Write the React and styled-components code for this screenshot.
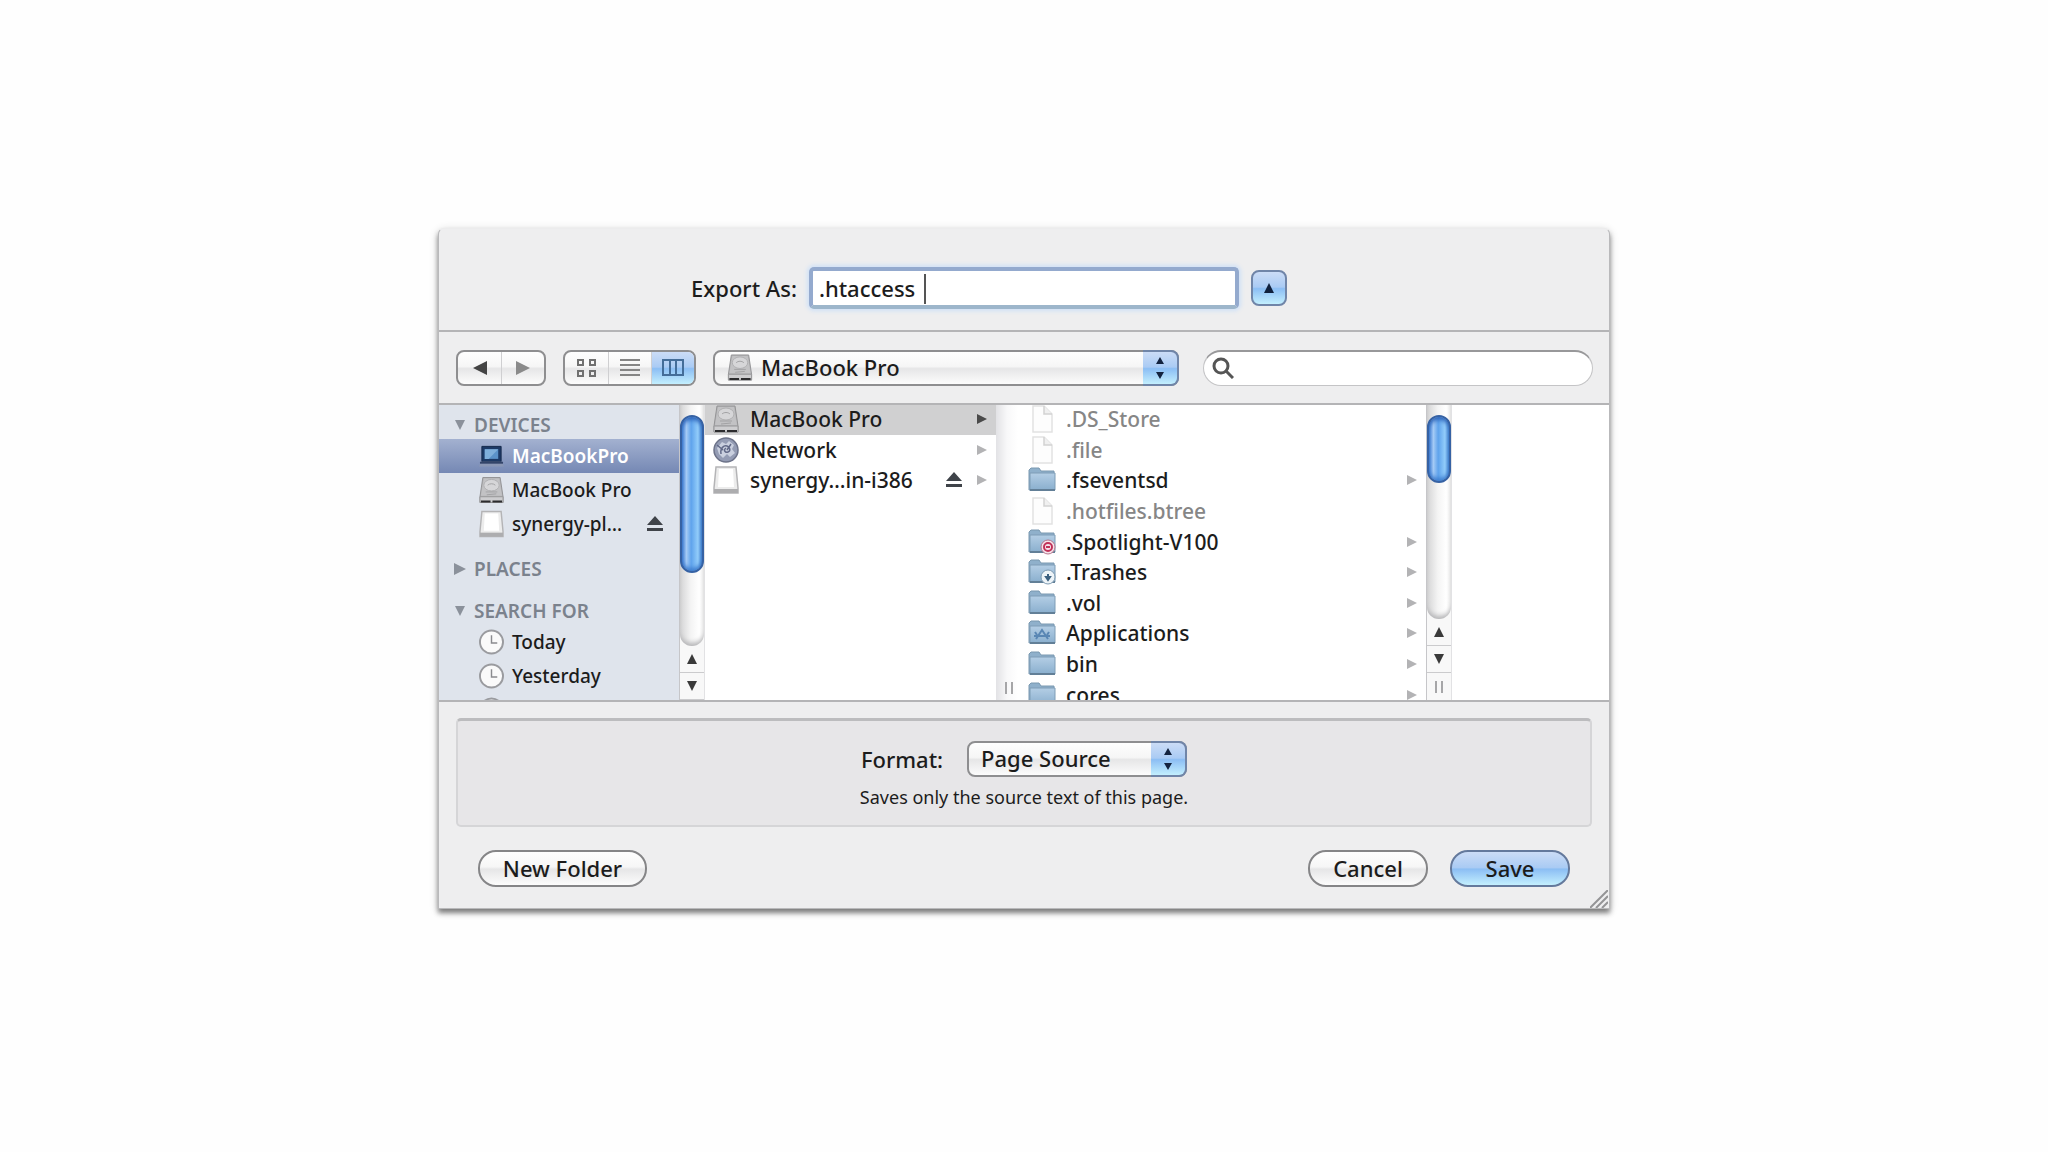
// Import: Dependencies
import React from "react";
import styled, { createGlobalStyle, css } from "styled-components";

// Data: Sidebar
const devices = [
  { name: "MacBookPro", icon: "laptop", selected: true },
  { name: "MacBook Pro", icon: "drive" },
  { name: "synergy-pl…", icon: "volume", ejectable: true },
];

const searches = [
  { name: "Today", icon: "clock" },
  { name: "Yesterday", icon: "clock" },
  { name: "Past Week", icon: "clock" },
];

// Data: Columns
const volumes = [
  { name: "MacBook Pro", icon: "drive", branch: true, selected: true },
  { name: "Network", icon: "network", branch: true },
  { name: "synergy…in-i386", icon: "volume", branch: true, ejectable: true },
];

const files = [
  { name: ".DS_Store", icon: "file", dimmed: true },
  { name: ".file", icon: "file", dimmed: true },
  { name: ".fseventsd", icon: "folder", branch: true },
  { name: ".hotfiles.btree", icon: "file", dimmed: true },
  { name: ".Spotlight-V100", icon: "locked", branch: true },
  { name: ".Trashes", icon: "dropbox", branch: true },
  { name: ".vol", icon: "folder", branch: true },
  { name: "Applications", icon: "apps", branch: true },
  { name: "bin", icon: "folder", branch: true },
  { name: "cores", icon: "folder", branch: true },
];

// UI: Drive icon
function DriveIcon() {
  return (
    <svg viewBox="0 0 26 28" aria-hidden="true">
      <path d="M4 1h18l3 20v6H1v-6z" fill="#b3b3b5" stroke="#939395" />
      <path d="M5 2h16l3 18H2z" fill="#c2c2c4" />
      <ellipse cx="13" cy="9" rx="8" ry="6" fill="#d6d6d8" stroke="#b0b0b2" />
      <path d="M9 9c2-2 6-2 8 0M7 16h12M8 19l10-1" fill="none" stroke="#a2a2a4" />
      <path d="M1 21h24v6H1z" fill="#cdcdcf" stroke="#98989a" />
      <path d="M2 26h10M14 26h10" stroke="#2c2c2e" strokeWidth="2" />
    </svg>
  );
}

// UI: Laptop icon
function LaptopIcon() {
  return (
    <svg viewBox="0 0 26 28" aria-hidden="true">
      <path d="M3 4h20v16H3z" fill="#1d3a66" stroke="#14284a" />
      <path d="M6 7h14v10H6z" fill="#5b92c9" />
      <path d="M6 7h14L10 17H6z" fill="#7fafdb" />
      <path d="M2 20h22l2 5H0z" fill="#8a97b5" />
      <path d="M1 21h24" stroke="#33456a" strokeWidth="2" />
    </svg>
  );
}

// UI: Volume icon
function VolumeIcon() {
  return (
    <svg viewBox="0 0 26 28" aria-hidden="true">
      <path d="M3 1h20l2 21v5H1v-5z" fill="#ececec" stroke="#b4b4b6" strokeWidth="1.5" />
      <path d="M6 3h14l1 18H5z" fill="#fff" />
      <path d="M1 23h24v4H1z" fill="#adadaf" />
    </svg>
  );
}

// UI: Clock icon
function ClockIcon() {
  return (
    <svg viewBox="0 0 26 28" aria-hidden="true">
      <circle cx="13" cy="14" r="12" fill="#fafafa" stroke="#9a9b9f" strokeWidth="2" />
      <path d="M13 7v8h6" fill="none" stroke="#8a8b8f" strokeWidth="1.5" />
    </svg>
  );
}

// UI: Network icon
function NetworkIcon() {
  return (
    <svg viewBox="0 0 26 28" aria-hidden="true">
      <circle cx="13" cy="14" r="12" fill="#949cb4" stroke="#6d7389" strokeWidth="1.5" />
      <path
        d="M4 12l5-6 4 2 3-3 5 4-2 4 3 4-5 4-3-3-4 4-4-4z"
        fill="#d3d9e6"
        opacity=".85"
      />
      <path
        d="M8 18c-1-6 3-9 6-8s4 5 1 6-5-2-2-4M4 9l6 5M18 8l-4 6"
        fill="none"
        stroke="#626a88"
        strokeWidth="1.5"
      />
    </svg>
  );
}

// UI: File icon
function FileIcon() {
  return (
    <svg viewBox="0 0 28 28" aria-hidden="true">
      <path d="M5 1h11l8 8v18H5z" fill="#fdfdfd" stroke="#e2e2e2" strokeWidth="1.5" />
      <path d="M16 1v8h8" fill="#f0f0f0" stroke="#d2d2d2" strokeWidth="1.5" />
    </svg>
  );
}

// UI: Folder icon, with the mark that sits on it
function FolderIcon({ mark }) {
  return (
    <svg viewBox="0 0 28 28" aria-hidden="true">
      <defs>
        <linearGradient id="folder-fill" x1="0" y1="0" x2="0" y2="1">
          <stop offset="0" stopColor="#b4cee5" />
          <stop offset="1" stopColor="#8aafce" />
        </linearGradient>
      </defs>
      <path d="M1 24V4l2-2h8l2 3h13v19z" fill="#8fb0cb" stroke="#7a98b0" />
      <path d="M2 7h25v17H2z" fill="url(#folder-fill)" stroke="#7f9db6" />
      <path d="M2 24h25" stroke="#627f97" strokeWidth="2" />
      {mark === "locked" && (
        <>
          <circle cx="20" cy="19" r="7" fill="#f5e3ea" stroke="#b5788f" />
          <circle cx="20" cy="19" r="4" fill="none" stroke="#c2335a" strokeWidth="2" />
          <path d="M18 19h4" stroke="#c2335a" strokeWidth="2" />
        </>
      )}
      {mark === "dropbox" && (
        <>
          <circle cx="20" cy="19" r="7" fill="#eef4f8" stroke="#7e9bb2" />
          <path d="M20 16v5M18 19l2 3 2-3z" fill="#3c6180" stroke="#3c6180" strokeWidth="2" />
        </>
      )}
      {mark === "apps" && (
        <path
          d="M8 20l6-9 6 9M6 17h5M17 17h5M11 17h6M7 13l2 3M21 13l-2 3"
          fill="none"
          stroke="#5a87b4"
          strokeWidth="2"
        />
      )}
    </svg>
  );
}

// UI: ItemIcon
function ItemIcon({ icon }) {
  switch (icon) {
    case "drive":
      return <DriveIcon />;
    case "laptop":
      return <LaptopIcon />;
    case "volume":
      return <VolumeIcon />;
    case "clock":
      return <ClockIcon />;
    case "network":
      return <NetworkIcon />;
    case "file":
      return <FileIcon />;
    default:
      return <FolderIcon mark={icon} />;
  }
}

// UI: Eject
function Eject() {
  return (
    <EjectButton type="button" aria-label="Eject">
      <svg viewBox="0 0 18 18" width="18" height="18">
        <path d="M9 1l8 9H1zM1 13h16v3H1z" fill="#3f4349" />
      </svg>
    </EjectButton>
  );
}

// UI: Arrow
function Arrow({ direction, size = 12, color = "#3a3a3a" }) {
  const shapes = {
    up: "M6 1l5 10H1z",
    down: "M6 11l5-10H1z",
    left: "M0 6l12-6v12z",
    right: "M12 6L0 0v12z",
  };

  return (
    <svg viewBox="0 0 12 12" width={size} height={size} aria-hidden="true">
      <path d={shapes[direction]} fill={color} />
    </svg>
  );
}

// UI: Scrollbar
function Scrollbar({ thumb, children }) {
  return (
    <ScrollbarContainer>
      <ScrollTrack>
        <ScrollThumb $size={thumb} />
      </ScrollTrack>
      <ScrollButton type="button" aria-label="Scroll up">
        <Arrow direction="up" />
      </ScrollButton>
      <ScrollButton type="button" aria-label="Scroll down">
        <Arrow direction="down" />
      </ScrollButton>
      {children}
    </ScrollbarContainer>
  );
}

// UI: SidebarGroup
function SidebarGroup({ title, open, items = [] }) {
  return (
    <SidebarSection>
      <SidebarHeading type="button" aria-expanded={Boolean(open)}>
        <Arrow direction={open ? "down" : "right"} color="#8b919b" />
        {title}
      </SidebarHeading>
      {items.map((item) => (
        <SidebarRow key={item.name} $selected={item.selected}>
          <SidebarItem type="button">
            <ItemIcon icon={item.icon} />
            {item.name}
          </SidebarItem>
          {item.ejectable && <Eject />}
        </SidebarRow>
      ))}
    </SidebarSection>
  );
}

// UI: FileColumn
function FileColumn({ items, wide }) {
  return (
    <ColumnList $wide={wide}>
      {items.map((item) => (
        <ColumnRow key={item.name} $selected={item.selected} $wide={wide}>
          <ColumnItem type="button" $dimmed={item.dimmed} $wide={wide}>
            <ItemIcon icon={item.icon} />
            {item.name}
          </ColumnItem>
          {item.ejectable && <Eject />}
          {item.branch && (
            <Arrow
              direction="right"
              size={10}
              color={item.selected ? "#4a4a4a" : "#b3b3b5"}
            />
          )}
        </ColumnRow>
      ))}
    </ColumnList>
  );
}

// UI: PopupCap
function PopupCap() {
  return (
    <PopupCapContainer>
      <svg viewBox="0 0 10 22" width="10" height="22" aria-hidden="true">
        <path d="M5 0l4 7H1zM5 22l4-7H1z" fill="#14233f" />
      </svg>
    </PopupCapContainer>
  );
}

// UI: App
function App() {
  return (
    <>
      <GlobalStyle />
      <Page>
        <Dialog role="dialog" aria-label="Export">
          <NameBar>
            <label htmlFor="export-name">Export As:</label>
            <NameField>
              <NameInput id="export-name" type="text" defaultValue=".htaccess " />
              <Caret />
            </NameField>
            <DisclosureButton type="button" aria-label="Collapse">
              <Arrow direction="up" color="#10203c" />
            </DisclosureButton>
          </NameBar>

          <Toolbar>
            <Segments>
              <Segment type="button" aria-label="Back">
                <Arrow direction="left" size={14} color="#444" />
              </Segment>
              <Segment type="button" aria-label="Forward">
                <Arrow direction="right" size={14} color="#8a8a8a" />
              </Segment>
            </Segments>

            <Segments>
              <Segment type="button" aria-label="Icons">
                <svg viewBox="0 0 20 20" width="20" height="20">
                  <path
                    d="M1 2h5v5H1zM13 2h5v5h-5zM1 13h5v5H1zM13 13h5v5h-5z"
                    fill="none"
                    stroke="#707070"
                    strokeWidth="2"
                  />
                </svg>
              </Segment>
              <Segment type="button" aria-label="List">
                <svg viewBox="0 0 20 20" width="20" height="20">
                  <path d="M0 2h20M0 7h20M0 12h20M0 17h20" stroke="#858585" strokeWidth="2" />
                </svg>
              </Segment>
              <Segment type="button" aria-label="Columns" aria-pressed="true" $active>
                <svg viewBox="0 0 24 20" width="24" height="20">
                  <path
                    d="M2 2h20v15H2zM9 2v15M15 2v15"
                    fill="none"
                    stroke="#446d99"
                    strokeWidth="2"
                  />
                </svg>
              </Segment>
            </Segments>

            <LocationPopup>
              <LocationIcon>
                <DriveIcon />
              </LocationIcon>
              <PopupSelect aria-label="Location" $withIcon>
                <option>MacBook Pro</option>
              </PopupSelect>
              <PopupCap />
            </LocationPopup>

            <SearchField>
              <svg viewBox="0 0 22 22" width="22" height="22" aria-hidden="true">
                <circle cx="9" cy="9" r="7" fill="none" stroke="#555" strokeWidth="3" />
                <path d="M14 14l7 7" stroke="#555" strokeWidth="3" />
              </svg>
              <SearchInput type="search" aria-label="Search" />
            </SearchField>
          </Toolbar>

          <Browser>
            <Sidebar>
              <SidebarGroup title="DEVICES" open items={devices} />
              <SidebarGroup title="PLACES" />
              <SidebarGroup title="SEARCH FOR" open items={searches} />
            </Sidebar>
            <Scrollbar thumb={158} />

            <FileColumn items={volumes} />
            <Splitter>
              <SplitterGrip />
            </Splitter>

            <FileColumn items={files} wide />
            <Scrollbar thumb={68}>
              <ScrollGripCell>
                <SplitterGrip />
              </ScrollGripCell>
            </Scrollbar>
          </Browser>

          <FormatPanel>
            <FormatRow>
              <label htmlFor="format">Format:</label>
              <FormatPopup>
                <PopupSelect id="format">
                  <option>Page Source</option>
                </PopupSelect>
                <PopupCap />
              </FormatPopup>
            </FormatRow>
            <FormatHint>Saves only the source text of this page.</FormatHint>
          </FormatPanel>

          <Footer>
            <PillButton type="button" $wide>
              New Folder
            </PillButton>
            <FooterRight>
              <PillButton type="button">Cancel</PillButton>
              <PillButton type="button" $primary>
                Save
              </PillButton>
            </FooterRight>
          </Footer>

          <ResizeGrip viewBox="0 0 18 18" aria-hidden="true">
            <path d="M0 18L18 0M6 18L18 6M12 18l6-6" stroke="#949496" strokeWidth="2" />
          </ResizeGrip>
        </Dialog>
      </Page>
    </>
  );
}

// Export: App
export default App;

// Styled: GlobalStyle
const GlobalStyle = createGlobalStyle`
  * {
    box-sizing: border-box;
  }

  body {
    background: #fefefe;
    margin: 0;
  }

  body,
  button,
  input,
  select {
    color: #1c1c1c;
    font-family: "Noto Sans", "Open Sans", sans-serif;
    font-size: 22px;
    font-weight: 500;
    line-height: 30px;
  }

  button {
    background: none;
    border: 0;
    padding: 0;
  }

  svg {
    display: block;
    flex: none;
  }
`;

// Shared: glossy fills
const blueGloss = css`
  background: linear-gradient(#cbdcf6 0%, #aacbf4 47%, #8cbef4 52%, #c3effe 100%);
`;

const whiteGloss = css`
  background: linear-gradient(#fefefe 0%, #f6f6f6 45%, #e6e6e7 52%, #fcfcfc 100%);
`;

// Styled: Page
const Page = styled.main`
  display: flex;
  justify-content: center;
  padding: 228px 16px;
`;

// Styled: Dialog
const Dialog = styled.section`
  background: #eeeeef;
  border: 1px solid #b9b9bb;
  border-top-color: #ececed;
  border-radius: 6px 6px 0 0;
  box-shadow: 0 4px 5px rgba(0, 0, 0, 0.45), 0 2px 10px rgba(0, 0, 0, 0.16);
  max-width: 1172px;
  position: relative;
  width: 100%;
`;

// Styled: NameBar
const NameBar = styled.div`
  align-items: center;
  border-bottom: 2px solid #b4b4b6;
  display: flex;
  height: 103px;
  justify-content: center;
  padding: 17px 70px 0 0;
`;

// Styled: NameField
const NameField = styled.div`
  margin: 0 12px;
  position: relative;
`;

// Styled: NameInput
const NameInput = styled.input`
  background: #fff;
  border: 4px solid #94aace;
  border-bottom-color: #9db6cb;
  border-radius: 5px;
  box-shadow: 0 0 4px 2px #cfe1f7;
  height: 42px;
  outline: 0;
  padding: 0 6px;
  width: 430px;
`;

// Styled: Caret
const Caret = styled.span`
  background: #555;
  height: 30px;
  left: 115px;
  position: absolute;
  top: 7px;
  width: 2px;
`;

// Styled: DisclosureButton
const DisclosureButton = styled.button`
  ${blueGloss}
  align-items: center;
  border: 2px solid #7085a8;
  border-radius: 8px;
  display: flex;
  height: 36px;
  justify-content: center;
  width: 36px;
`;

// Styled: Toolbar
const Toolbar = styled.div`
  align-items: center;
  border-bottom: 2px solid #b4b4b6;
  display: flex;
  gap: 17px;
  height: 73px;
  padding: 0 16px 0 17px;
`;

// Styled: Segments
const Segments = styled.div`
  ${whiteGloss}
  border: 2px solid #8e8e90;
  border-radius: 8px;
  display: flex;
  flex: none;
  height: 36px;
  overflow: hidden;
`;

// Styled: Segment
const Segment = styled.button`
  align-items: center;
  display: flex;
  justify-content: center;
  width: 43px;

  & + & {
    border-left: 1px solid #cfcfd1;
  }

  ${({ $active }) => $active && blueGloss}
`;

// Styled: PopupSelect
const PopupSelect = styled.select`
  ${whiteGloss}
  appearance: none;
  border: 2px solid #8e8e90;
  border-radius: 8px;
  height: 36px;
  padding: 0 44px 2px ${({ $withIcon }) => ($withIcon ? "46px" : "12px")};
  width: 100%;
`;

// Styled: PopupCapContainer
const PopupCapContainer = styled.span`
  ${blueGloss}
  align-items: center;
  border: 2px solid #7085a8;
  border-left: 0;
  border-radius: 0 8px 8px 0;
  display: flex;
  height: 36px;
  justify-content: center;
  pointer-events: none;
  position: absolute;
  right: 0;
  top: 0;
  width: 36px;
`;

// Styled: LocationPopup
const LocationPopup = styled.div`
  flex: 1;
  position: relative;
`;

// Styled: LocationIcon
const LocationIcon = styled.span`
  left: 14px;
  pointer-events: none;
  position: absolute;
  top: 4px;

  & svg {
    height: 27px;
    width: 26px;
  }
`;

// Styled: SearchField
const SearchField = styled.div`
  align-items: center;
  background: #fff;
  border: 1px solid #c4c4c6;
  border-radius: 18px;
  border-top: 2px solid #98989a;
  display: flex;
  flex: 0 1 390px;
  height: 36px;
  margin-left: 7px;
  padding: 0 8px;
`;

// Styled: SearchInput
const SearchInput = styled.input`
  background: transparent;
  border: 0;
  flex: 1;
  height: 30px;
  min-width: 0;
  outline: 0;
`;

// Styled: Browser
const Browser = styled.div`
  background: #fff;
  border-bottom: 2px solid #b4b4b6;
  display: flex;
  height: 297px;
  overflow: hidden;
`;

// Styled: Sidebar
const Sidebar = styled.nav`
  background: #dfe4ec;
  flex: none;
  overflow: hidden;
  padding-top: 6px;
  width: 240px;
`;

// Styled: SidebarSection
const SidebarSection = styled.div`
  margin-bottom: 14px;
`;

// Styled: SidebarHeading
const SidebarHeading = styled.button`
  align-items: center;
  color: #7b828d;
  display: flex;
  font-size: 19px;
  font-weight: 600;
  gap: 8px;
  height: 28px;
  padding-left: 15px;
  width: 100%;
`;

// Styled: SidebarRow
const SidebarRow = styled.div`
  align-items: center;
  display: flex;
  height: 34px;
  padding: 0 15px 0 40px;

  ${({ $selected }) =>
    $selected &&
    css`
      background: linear-gradient(#a3b1d0, #7588b4);

      & button {
        color: #fff;
        font-weight: 600;
      }
    `}
`;

// Styled: SidebarItem
const SidebarItem = styled.button`
  align-items: center;
  display: flex;
  flex: 1;
  font-size: 19px;
  gap: 8px;

  & svg {
    height: 28px;
    width: 25px;
  }
`;

// Styled: EjectButton
const EjectButton = styled.button`
  flex: none;
`;

// Styled: ScrollbarContainer
const ScrollbarContainer = styled.div`
  background: #f8f8f8;
  border-left: 1px solid #c6c6c9;
  border-right: 1px solid #e2e2e4;
  display: flex;
  flex: none;
  flex-direction: column;
  width: 26px;
`;

// Styled: ScrollTrack
const ScrollTrack = styled.div`
  background: linear-gradient(90deg, #d4d4d5, #f4f4f4 45%, #fff 80%, #ececec);
  border-radius: 0 0 12px 12px;
  box-shadow: inset 0 -5px 5px -2px #b4b4b6;
  flex: 1;
  padding-top: 10px;
`;

// Styled: ScrollThumb
const ScrollThumb = styled.div`
  background: linear-gradient(90deg, #4a86d8 0%, #a5cbf5 22%, #5fa3ec 46%, #93cdfa 80%, #4c8bd2 100%);
  border: 2px solid #3662a4;
  border-radius: 12px;
  box-shadow: inset 0 4px 4px -1px #2f66bb, inset 0 -4px 4px -1px #3f7fd0;
  height: ${({ $size }) => $size}px;
`;

// Styled: ScrollButton
const ScrollButton = styled.button`
  align-items: center;
  border-bottom: 1px solid #cbcbcd;
  display: flex;
  height: 27px;
  justify-content: center;
`;

// Styled: ScrollGripCell
const ScrollGripCell = styled.div`
  display: flex;
  height: 27px;
  justify-content: center;
  padding-top: 8px;
`;

// Styled: ColumnList
const ColumnList = styled.div`
  display: grid;
  flex: none;
  grid-template-rows: repeat(10, 1fr);
  height: 306px;
  margin-top: -1px;
  width: ${({ $wide }) => ($wide ? "408px" : "291px")};
`;

// Styled: ColumnRow
const ColumnRow = styled.div`
  align-items: center;
  background: ${({ $selected }) => ($selected ? "#d0d0d1" : "transparent")};
  display: flex;
  gap: 14px;
  padding: 0 9px 0 ${({ $wide }) => ($wide ? "10px" : "8px")};
`;

// Styled: ColumnItem
const ColumnItem = styled.button`
  align-items: center;
  color: ${({ $dimmed }) => ($dimmed ? "#868686" : "#1c1c1c")};
  display: flex;
  flex: 1;
  font-size: 21px;
  gap: ${({ $wide }) => ($wide ? "10px" : "11px")};

  & svg {
    height: 28px;
    width: ${({ $wide }) => ($wide ? "28px" : "26px")};
  }
`;

// Styled: Splitter
const Splitter = styled.div`
  align-items: flex-end;
  background: linear-gradient(90deg, #e2e2e5, #f8f8f9 50%, #fff);
  display: flex;
  flex: none;
  justify-content: center;
  padding: 0 0 6px 4px;
  width: 22px;
`;

// Styled: SplitterGrip
const SplitterGrip = styled.span`
  border-left: 2px solid #a6a6a8;
  border-right: 2px solid #a6a6a8;
  height: 12px;
  width: 8px;
`;

// Styled: FormatPanel
const FormatPanel = styled.div`
  align-items: center;
  background: #e7e6e8;
  border: 2px solid #d5d5d7;
  border-radius: 5px;
  border-top: 3px solid #bcbcbe;
  display: flex;
  flex-direction: column;
  height: 109px;
  margin: 16px 17px 0;
  padding-top: 20px;
`;

// Styled: FormatRow
const FormatRow = styled.div`
  align-items: center;
  display: flex;
  gap: 24px;
`;

// Styled: FormatPopup
const FormatPopup = styled.div`
  position: relative;
  width: 220px;
`;

// Styled: FormatHint
const FormatHint = styled.p`
  font-size: 18px;
  font-weight: 400;
  line-height: 24px;
  margin: 8px 0 0;
`;

// Styled: Footer
const Footer = styled.div`
  display: flex;
  justify-content: space-between;
  padding: 23px 39px 21px;
`;

// Styled: FooterRight
const FooterRight = styled.div`
  display: flex;
  gap: 22px;
`;

// Styled: PillButton
const PillButton = styled.button`
  ${({ $primary }) => ($primary ? blueGloss : whiteGloss)}
  border: 2px solid ${({ $primary }) => ($primary ? "#64799c" : "#858587")};
  border-radius: 18px;
  height: 37px;
  padding-bottom: 2px;
  width: ${({ $wide }) => ($wide ? "169px" : "120px")};
`;

// Styled: ResizeGrip
const ResizeGrip = styled.svg`
  bottom: 0;
  height: 18px;
  position: absolute;
  right: 1px;
  width: 18px;
`;
